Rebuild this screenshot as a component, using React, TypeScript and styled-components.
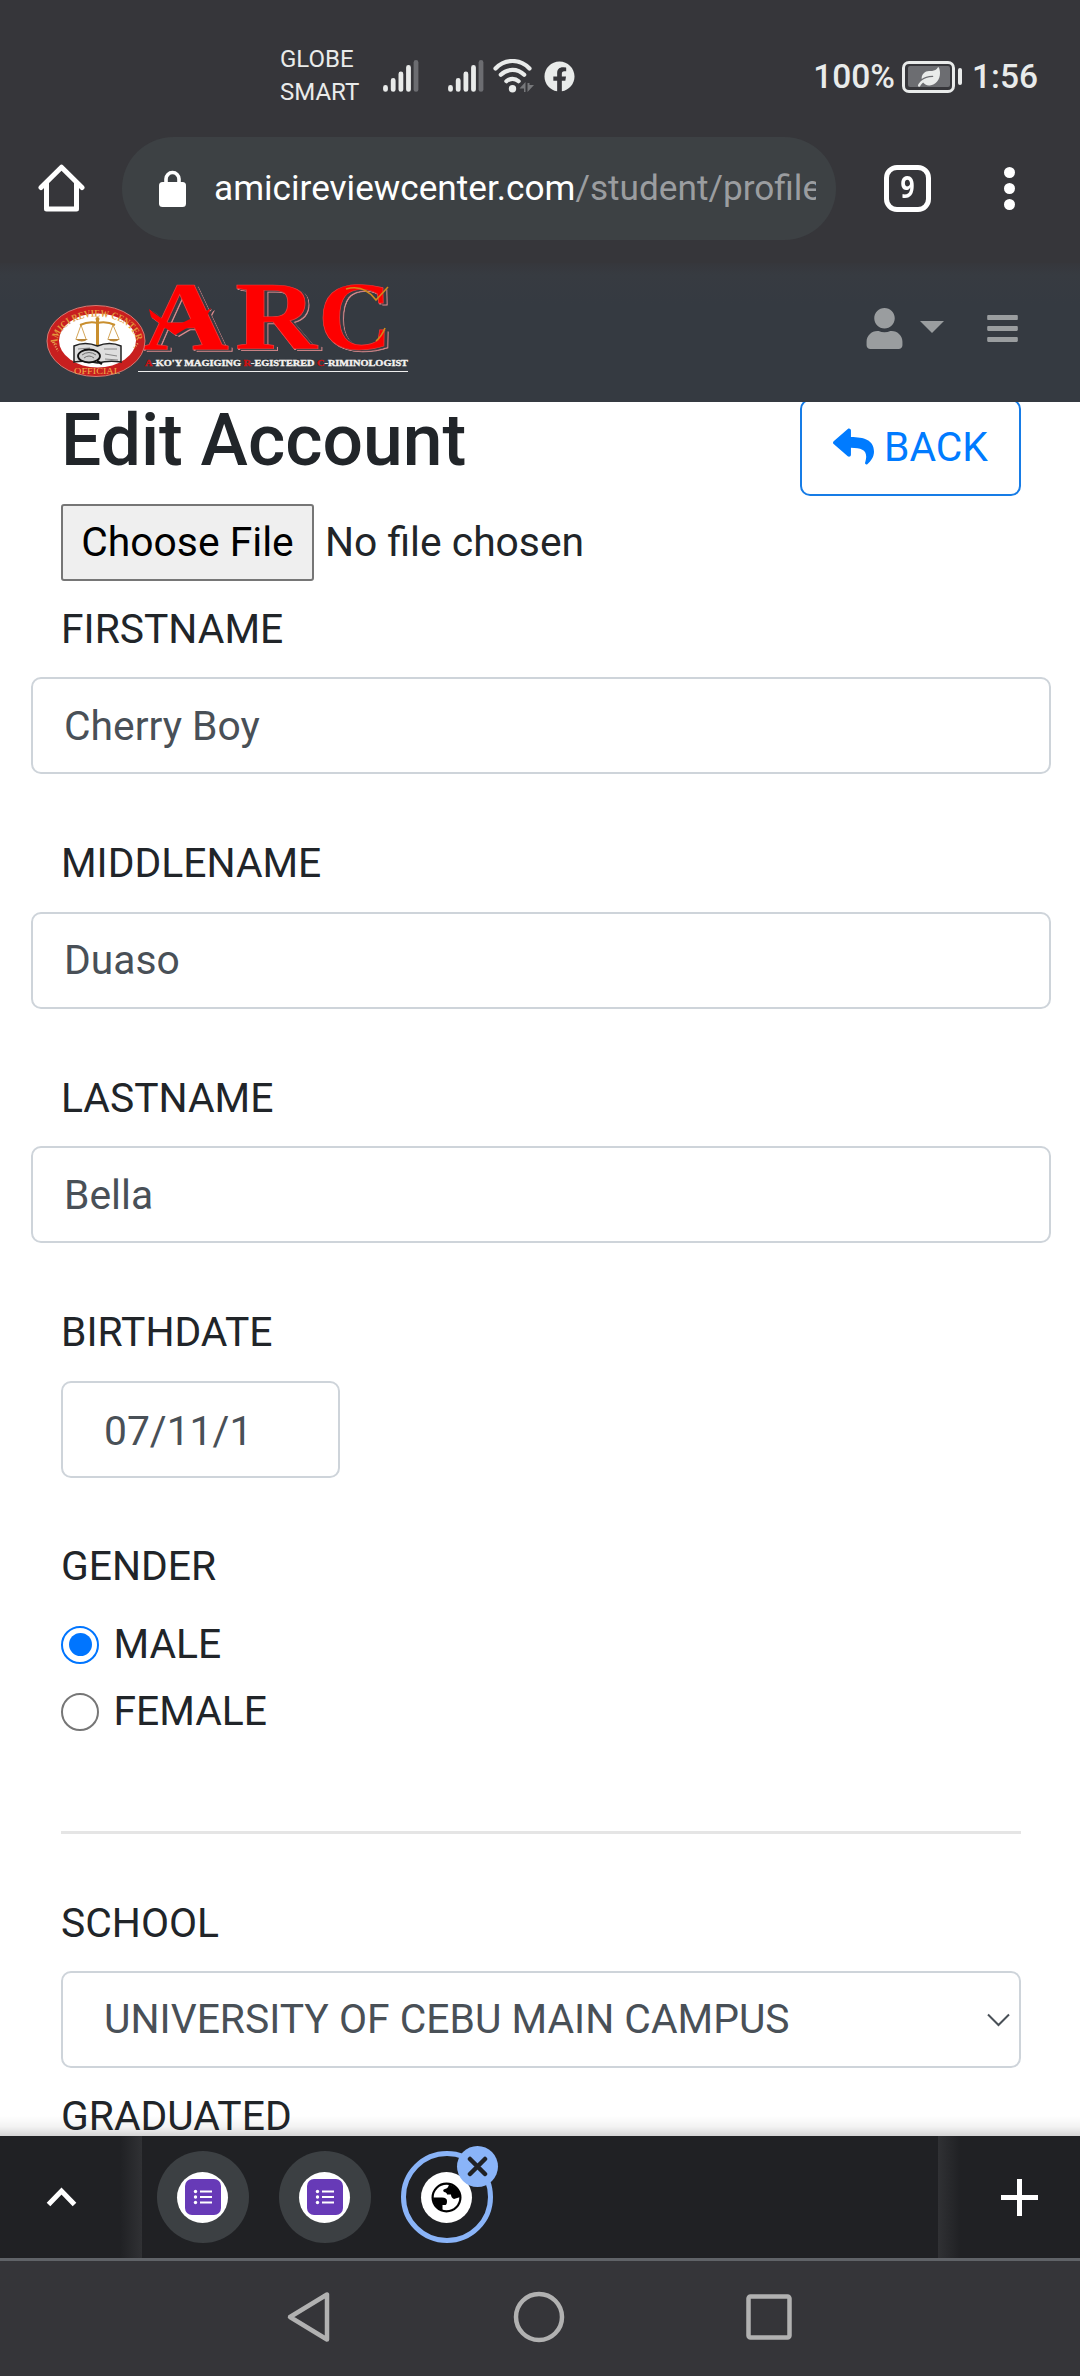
import React from 'react';
import styled, { createGlobalStyle } from 'styled-components';
import { FaBars, FaFacebook, FaLeaf, FaReply, FaUser } from 'react-icons/fa';

const GlobalStyle = createGlobalStyle`
  *, *::before, *::after { box-sizing: border-box; }
  body { margin: 0; background: #fff; font-family: Roboto, "Noto Sans", sans-serif; }
  input, select, button { font-family: inherit; }
`;

const Screen = styled.div`
  display: flex;
  flex-direction: column;
  width: 1080px;
  height: 2376px;
  overflow: hidden;
  background: #fff;
`;

const StatusBar = styled.header`
  display: flex;
  flex: none;
  align-items: center;
  height: 120px;
  padding: 32px 42px 0 280px;
  background: #36363a;
  color: #e9ebea;
`;

const Carriers = styled.div`
  width: 103px;
  font-size: 24px;
  line-height: 33px;
`;

const SignalSlot = styled.div<{ $gap: number }>`
  display: flex;
  margin-right: ${(p) => p.$gap}px;
`;

const FacebookMark = styled(FaFacebook)`
  width: 31px;
  height: 31px;
  margin-left: 10px;
`;

const StatusRight = styled.div`
  display: flex;
  align-items: center;
  margin-left: auto;
  padding-top: 1px;
  font-size: 33.5px;
  font-weight: 500;
  line-height: 40px;
`;

const Battery = styled.div`
  display: flex;
  align-items: center;
  justify-content: center;
  width: 53px;
  height: 32px;
  margin-left: 7px;
  border: 3px solid #e9ebea;
  border-radius: 7px;
`;

const BatteryFill = styled.div`
  display: flex;
  align-items: center;
  justify-content: center;
  width: 42px;
  height: 21px;
  border-radius: 2px;
  background: #6c6d71;
`;

const BatteryNub = styled.div`
  width: 4px;
  height: 17px;
  margin: 0 10px 0 3px;
  border-radius: 2px;
  background: #e9ebea;
`;

const Toolbar = styled.div`
  display: flex;
  flex: none;
  align-items: center;
  height: 143px;
  padding: 0 65px 7px 38px;
  background: #36363a;
  color: #fff;
`;

const AddressBar = styled.div`
  display: flex;
  align-items: center;
  width: 714px;
  height: 103px;
  margin-left: 37px;
  padding: 0 20px 0 37px;
  border-radius: 52px;
  background: #3d4144;
`;

const Url = styled.div`
  flex: 1;
  margin-left: 28px;
  overflow: hidden;
  font-size: 35.2px;
  line-height: 50px;
  white-space: nowrap;
`;

const UrlPath = styled.span`
  color: #9b9da0;
`;

const TabCount = styled.div`
  display: flex;
  align-items: center;
  justify-content: center;
  width: 47px;
  height: 47px;
  margin-left: 48px;
  padding-bottom: 3px;
  border: 5px solid #fff;
  border-radius: 13px;
  font-family: "Open Sans", Roboto, sans-serif;
  font-size: 30px;
  font-weight: 700;
  line-height: 30px;
`;

const TabDigit = styled.span`
  transform: scaleX(0.82);
`;

const OverflowMenu = styled.div`
  display: flex;
  flex-direction: column;
  gap: 5px;
  margin-left: auto;
`;

const Dot = styled.i`
  width: 11px;
  height: 11px;
  border-radius: 50%;
  background: #fff;
`;

const SiteNav = styled.nav`
  display: flex;
  flex: none;
  align-items: flex-start;
  height: 139px;
  padding: 15px 60px 0 44px;
  background: linear-gradient(#36373c, #373b41 12px, #353a41 40px);
  color: #9a9d9f;
`;

const NavTools = styled.div`
  display: flex;
  align-items: center;
  height: 41px;
  margin: 30px 0 0 auto;
`;

const Caret = styled.i`
  margin: -3px 41px 0 15px;
  border: 12.5px solid transparent;
  border-top-color: #9a9d9f;
  border-bottom: 0;
`;

const LogoLetters = styled.g`
  font-size: 97px;
  font-weight: 700;
  filter: drop-shadow(3.5px 1px 0 #373b42) drop-shadow(1.3px 1.2px 0 #dd8b8d);
`;

const Page = styled.main`
  position: relative;
  flex: none;
  height: 1734px;
  padding: 0 59px 0 61px;
  overflow: hidden;
  background: #fff;
  color: #212529;
  font-size: 40.8px;
  line-height: 61px;
`;

const BottomShade = styled.div`
  position: absolute;
  right: 0;
  bottom: 0;
  left: 0;
  height: 20px;
  background: linear-gradient(rgba(0, 0, 0, 0), rgba(0, 0, 0, 0.05) 55%, rgba(0, 0, 0, 0.17));
`;

const TitleRow = styled.div`
  display: flex;
  align-items: flex-start;
  justify-content: space-between;
  height: 106px;
  margin-top: -4px;
`;

const Title = styled.h3`
  margin: 0;
  font-size: 71.4px;
  font-weight: 500;
  line-height: 86px;
`;

const BackButton = styled.button`
  display: flex;
  align-items: center;
  gap: 10px;
  width: 221px;
  height: 97px;
  margin: 1px 0 0;
  padding: 0 0 2px 31px;
  border: 2px solid #177ce6;
  border-radius: 10px;
  background: #fff;
  color: #007bff;
  font-size: 40.8px;
`;

const FileRow = styled.div`
  display: flex;
  align-items: center;
  height: 77px;
  margin-bottom: 17.5px;
`;

const FileButton = styled.button`
  width: 253px;
  height: 77px;
  margin-right: 11px;
  padding: 0 0 1px;
  border: 2px solid #767676;
  border-radius: 3px;
  background: #efefef;
  color: #000;
  font-size: 40.8px;
  line-height: 60px;
`;

const FieldGroup = styled.div<{ $after: number }>`
  margin-bottom: ${(p) => p.$after}px;
`;

const Label = styled.label`
  display: block;
  height: 61px;
  margin-bottom: 17.5px;
`;

const TextInput = styled.input`
  display: block;
  width: 1020px;
  height: 97px;
  margin: 0 -30px;
  padding: 0 31px;
  border: 2px solid #ced4da;
  border-radius: 10px;
  background: #fff;
  color: #495057;
  font-size: 40.8px;
`;

const DateInput = styled(TextInput)`
  width: 279px;
  margin: 0;
  padding: 3px 41px 0;
`;

const RadioRow = styled.label`
  display: flex;
  align-items: center;
  height: 61px;
  margin-bottom: 6px;
`;

const Radio = styled.i<{ $on?: boolean }>`
  display: flex;
  align-items: center;
  justify-content: center;
  width: 38px;
  height: 38px;
  margin-right: 14.5px;
  border: 2.5px solid ${(p) => (p.$on ? '#0075ff' : '#767676')};
  border-radius: 50%;

  &::after {
    width: 23px;
    height: 23px;
    border-radius: 50%;
    background: ${(p) => (p.$on ? '#0075ff' : 'transparent')};
    content: '';
  }
`;

const Divider = styled.hr`
  height: 3px;
  margin: 89px 0 58.5px;
  border: 0;
  background: #e5e5e5;
`;

const Select = styled.div`
  display: flex;
  align-items: center;
  justify-content: space-between;
  height: 97px;
  padding: 0 9px 0 41px;
  border: 2px solid #ced4da;
  border-radius: 10px;
  color: #495057;
`;

const TabStrip = styled.footer`
  display: flex;
  flex: none;
  height: 125px;
  border-bottom: 3px solid #606368;
  background: #202124;
`;

const StripEnd = styled.div<{ $side: 'left' | 'right' }>`
  display: flex;
  align-items: center;
  width: 142px;
  padding-left: ${(p) => (p.$side === 'left' ? 46 : 63)}px;
  background: linear-gradient(
    to ${(p) => p.$side},
    #303134,
    #202124 22px
  );
`;

const TabList = styled.div`
  display: flex;
  flex: 1;
  align-items: center;
  gap: 30px;
  padding-left: 14.5px;
`;

const TabBubble = styled.div<{ $active?: boolean }>`
  position: relative;
  display: flex;
  align-items: center;
  justify-content: center;
  width: 92px;
  height: 92px;
  border: ${(p) => (p.$active ? '5.5px solid #8ab4f8' : '0')};
  border-radius: 50%;
  background: ${(p) => (p.$active ? 'transparent' : '#3c4043')};
`;

const Favicon = styled.div`
  display: flex;
  align-items: center;
  justify-content: center;
  width: 51px;
  height: 51px;
  border-radius: 50%;
  background: #fff;
`;

const CloseBadge = styled.div`
  position: absolute;
  top: -10.5px;
  right: -10.5px;
  display: flex;
  align-items: center;
  justify-content: center;
  width: 41px;
  height: 41px;
  border-radius: 50%;
  background: #8ab4f8;
`;

const SystemNav = styled.div`
  display: flex;
  flex: 1;
  align-items: center;
  padding: 0 288px 3px 286px;
  justify-content: space-between;
  background: #353539;
`;

const Signal = () => (
  <svg width="36" height="34" viewBox="0 0 36 34" strokeWidth="4.8" strokeLinecap="round" stroke="#e9ebea">
    <path d="M2.5 28.4v2M10.2 21.4v9M17.9 14.9v15.5M25.5 8.4v22" />
    <path d="M33 3.4v27" stroke="#6c6d71" />
  </svg>
);

const Wifi = () => (
  <svg width="41" height="34" viewBox="0 0 41 34" fill="none" stroke="#e9ebea" strokeWidth="4.2" strokeLinecap="round">
    <path d="M2.5 9.5C12-.5 27-.5 36.500 9.500M7.800 15.800c6.500-6.600 16.900-6.600 23.400 0M13.400 22.200c3.500-3.200 8.700-3.200 12.200 0" />
    <circle cx="19.5" cy="29.8" r="3.7" fill="#e9ebea" stroke="none" />
    <path d="M26.5 29.5l6-6.5v10h-1.500v-3.500zM34.500 24v9l6.500-7h-4.500v-2z" fill="#77787b" stroke="none" />
  </svg>
);

const LETTERS = [
  { ch: 'A', x: 142, w: 87 },
  { ch: 'R', x: 235, w: 82 },
  { ch: 'C', x: 318, w: 74 },
];

const ArcLogo = () => (
  <svg width="366" height="108" viewBox="44 278 366 108" fontFamily="'Liberation Serif', serif">
    <defs>
      <path id="sealTop" d="M57 345A40 28.5 0 0 1 137 345" />
    </defs>
    <LogoLetters>
      {LETTERS.map(({ ch, x, w }) => (
        <text key={ch} x={x} y="348.5" textLength={w} lengthAdjust="spacingAndGlyphs" fill="#fe0000" stroke="#f03a3a" strokeWidth=".7">{ch}</text>
      ))}
      <path d="M149 309l5 4 20 14 34-17 3-2-4 8-32 19-24-18z" fill="#fe0000" />
    </LogoLetters>
    <path d="M346 289q18-5 30 11l12-13M385 328q-3 8-9 13" fill="none" stroke="#cf8a1c" strokeWidth="1.6" />
    <ellipse cx="96" cy="341" rx="49" ry="35.5" fill="#c81f1f" stroke="#d57a72" strokeWidth="1" />
    <ellipse cx="97.5" cy="340.5" rx="38.5" ry="27" fill="#fff" />
    <text fontSize="10" fontWeight="700" fill="#e39a3c">
      <textPath href="#sealTop" textLength="104" lengthAdjust="spacingAndGlyphs">AMICI REVIEW CENTER</textPath>
    </text>
    <text x="74" y="374" fontSize="9" fill="#f0b04a" textLength="46" lengthAdjust="spacingAndGlyphs">OFFICIAL</text>
    <g fill="none" stroke="#c98f2e" strokeWidth="1.5">
      <path d="M97.500 320v28" strokeWidth="3" />
      <path d="M80 325q9-4 17.500-2q9-2 17.500 2" strokeWidth="2" />
      <path d="M81 325l-5 14M81 325l5 14M113 325l-5 14M113 325l6 14" strokeWidth=".8" />
    </g>
    <circle cx="97.500" cy="319" r="2" fill="#c98f2e" />
    <path d="M75 339h13q-6 5-13 0zM107 339h13q-6 5-13 0z" fill="#b98637" />
    <path d="M74 346q11-5 23.500 0q12-5 23.500 0v16q-12-2-23.500 1q-12-3-23.500-1z" fill="#dedede" stroke="#222" strokeWidth="1.500" />
    <path d="M78 349l12-1M79 358l8 1M104 349l13 0M105 354l12 2M105 359l13 1" stroke="#888" strokeWidth="1" />
    <ellipse cx="89" cy="356" rx="11" ry="6.500" fill="#cfcfcf" stroke="#111" strokeWidth="1.800" />
    <path d="M82 355q7-5 14 0M84 358q5-4 10 0" stroke="#666" strokeWidth=".9" fill="none" />
    <path d="M97 361l5 3" stroke="#111" strokeWidth="2.500" />
    <path d="M53 342l5 9M134 348l4-5" stroke="#e8b060" strokeWidth="2" strokeDasharray="1 1.500" />
    <text x="145" y="366" fontSize="8.500" fontWeight="700" fill="#f4f2ef" stroke="#f4f2ef" strokeWidth=".35" textLength="263" lengthAdjust="spacingAndGlyphs">
      <tspan fill="#c11" stroke="#c11">A</tspan>-KO'Y MAGIGING <tspan fill="#c11" stroke="#c11">R</tspan>-EGISTERED <tspan fill="#c11" stroke="#c11">C</tspan>-RIMINOLOGIST
    </text>
    <path d="M138 371.500h270" stroke="#eee" strokeWidth="1.200" />
  </svg>
);

const FormsIcon = () => (
  <Favicon>
    <svg width="36" height="36" viewBox="0 0 36 36">
      <rect width="36" height="36" rx="7" fill="#673ab7" />
      <g fill="#fff">
        <circle cx="10.500" cy="12.500" r="1.700" />
        <circle cx="10.500" cy="18" r="1.700" />
        <circle cx="10.500" cy="23.500" r="1.700" />
        <path d="M15 11.500h12v2H15zM15 17h12v2H15zM15 22.500h12v2H15z" />
      </g>
    </svg>
  </Favicon>
);

const GlobeIcon = () => (
  <Favicon>
    <svg width="31" height="31" viewBox="0 0 31 31">
      <circle cx="15.500" cy="15.500" r="13.900" fill="#fff" stroke="#000" strokeWidth="2.200" />
      <path d="M2 15.500h9q5 0 5 3.500t-1.500 4h-3v5.500A14 14 0 0 1 2 15.500zM18 2.500q-1 4-4 4.500t-1 3q3 .5 3 2.500h4q0 3 3 4.500 3-1 6.500-2A14 14 0 0 0 18 2.500z" />
    </svg>
  </Favicon>
);

const NAMES: [string, string][] = [
  ['FIRSTNAME', 'Cherry Boy'],
  ['MIDDLENAME', 'Duaso'],
  ['LASTNAME', 'Bella'],
];

export default function App() {
  return (
    <Screen>
      <GlobalStyle />
      <StatusBar>
        <Carriers>GLOBE<br />SMART</Carriers>
        <SignalSlot $gap={29}><Signal /></SignalSlot>
        <SignalSlot $gap={9}><Signal /></SignalSlot>
        <Wifi />
        <FacebookMark />
        <StatusRight>
          100%
          <Battery><BatteryFill><FaLeaf size={22} /></BatteryFill></Battery>
          <BatteryNub />
          1:56
        </StatusRight>
      </StatusBar>

      <Toolbar>
        <svg width="47" height="48" viewBox="0 0 47 48" fill="none" stroke="#fff" strokeWidth="5" strokeLinejoin="round" strokeLinecap="round">
          <path d="M3 23.500L23.500 3.200 44 23.500" />
          <path d="M8.500 19v26h30V19" />
        </svg>
        <AddressBar>
          <svg width="27" height="37" viewBox="0 0 27 37">
            <path d="M7 14V9a6.500 6.500 0 0 1 13 0v5" fill="none" stroke="#fff" strokeWidth="3.600" />
            <rect y="12" width="27" height="25" rx="3.500" fill="#fff" />
          </svg>
          <Url>amicireviewcenter.com<UrlPath>/student/profile</UrlPath></Url>
        </AddressBar>
        <TabCount><TabDigit>9</TabDigit></TabCount>
        <OverflowMenu><Dot /><Dot /><Dot /></OverflowMenu>
      </Toolbar>

      <SiteNav>
        <ArcLogo />
        <NavTools>
          <FaUser size={41} />
          <Caret />
          <FaBars size={35} />
        </NavTools>
      </SiteNav>

      <Page>
        <TitleRow>
          <Title>Edit Account</Title>
          <BackButton><FaReply size={41} />BACK</BackButton>
        </TitleRow>
        <FileRow>
          <FileButton>Choose File</FileButton>
          No file chosen
        </FileRow>
        {NAMES.map(([label, value]) => (
          <FieldGroup key={label} $after={59}>
            <Label>{label}</Label>
            <TextInput defaultValue={value} />
          </FieldGroup>
        ))}
        <FieldGroup $after={58}>
          <Label>BIRTHDATE</Label>
          <DateInput defaultValue="07/11/1" />
        </FieldGroup>
        <Label>GENDER</Label>
        <RadioRow><Radio $on />MALE</RadioRow>
        <RadioRow><Radio />FEMALE</RadioRow>
        <Divider />
        <FieldGroup $after={17.5}>
          <Label>SCHOOL</Label>
          <Select>
            UNIVERSITY OF CEBU MAIN CAMPUS
            <svg width="23" height="14" viewBox="0 0 23 14" fill="none" stroke="#495057" strokeWidth="2">
              <path d="M1 1.500l10.500 10.500L22 1.500" />
            </svg>
          </Select>
        </FieldGroup>
        <Label>GRADUATED</Label>
        <BottomShade />
      </Page>

      <TabStrip>
        <StripEnd $side="left">
          <svg width="31" height="20" viewBox="0 0 31 20" fill="none" stroke="#fff" strokeWidth="5">
            <path d="M2.500 17.500L15.500 4l13 13.500" />
          </svg>
        </StripEnd>
        <TabList>
          <TabBubble><FormsIcon /></TabBubble>
          <TabBubble><FormsIcon /></TabBubble>
          <TabBubble $active>
            <GlobeIcon />
            <CloseBadge>
              <svg width="21" height="21" viewBox="0 0 21 21" stroke="#202124" strokeWidth="4.500" strokeLinecap="round">
                <path d="M3 3l15 15M18 3L3 18" />
              </svg>
            </CloseBadge>
          </TabBubble>
        </TabList>
        <StripEnd $side="right">
          <svg width="37" height="37" viewBox="0 0 37 37" stroke="#fff" strokeWidth="5">
            <path d="M18.500 0v37M0 18.500h37" />
          </svg>
        </StripEnd>
      </TabStrip>

      <SystemNav>
        <svg width="45" height="52" viewBox="0 0 45 52" fill="none" stroke="#b1b1b1" strokeWidth="4.500" strokeLinejoin="round">
          <path d="M4 26L41 3.500v45z" />
        </svg>
        <svg width="52" height="52" viewBox="0 0 52 52" fill="none" stroke="#b1b1b1" strokeWidth="4.500">
          <circle cx="26" cy="26" r="23" />
        </svg>
        <svg width="46" height="46" viewBox="0 0 46 46" fill="none" stroke="#b1b1b1" strokeWidth="4.500">
          <rect x="2.500" y="2.500" width="41" height="41" rx="2" />
        </svg>
      </SystemNav>
    </Screen>
  );
}
